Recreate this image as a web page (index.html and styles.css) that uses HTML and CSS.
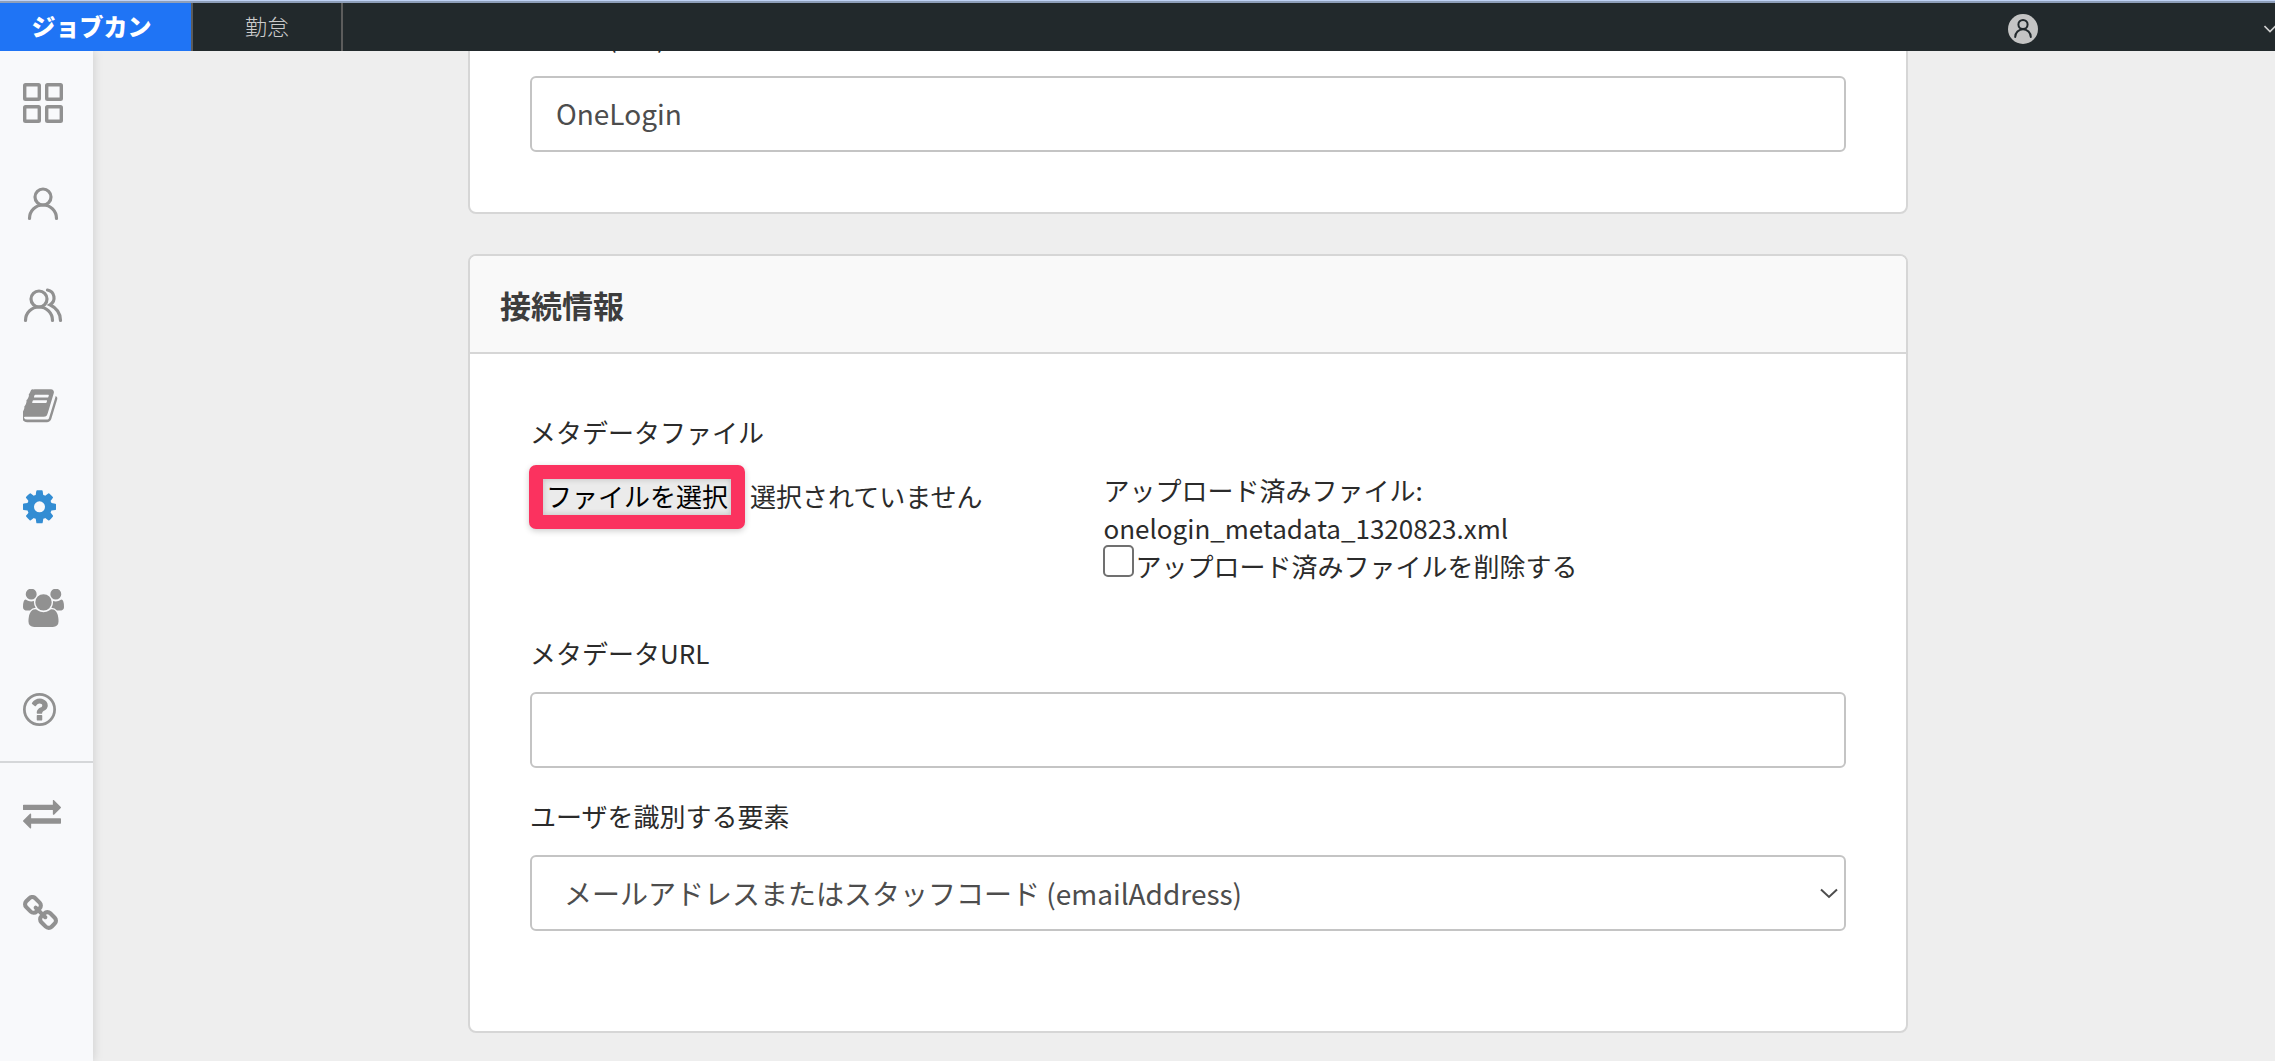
FILE: index.html
```html
<!DOCTYPE html>
<html lang="ja">
<head>
    <meta charset="UTF-8">
    <meta name="viewport" content="width=device-width, initial-scale=1.0">
    <title>ジョブカン</title>
    <link rel="stylesheet" href="styles.css">
</head>
<body>
    <header class="header">
        <a class="brand" href="#">ジョブカン</a>
        <a class="tab" href="#">勤怠</a>
        <button class="account" type="button" aria-label="アカウント">
            <svg width="30" height="30" viewBox="0 0 30 30">
                <circle cx="15" cy="15" r="15" fill="#c4c4c4"/>
                <g fill="none" stroke="#22292c" stroke-width="2" stroke-linecap="round">
                    <circle cx="15" cy="10.500" r="4.600"/>
                    <path d="M7.200 23a7.800 7.800 0 0 1 15.600 0"/>
                </g>
            </svg>
            <svg width="11" height="8" viewBox="0 0 11 8">
                <path d="M0.500 1L6 6.500L11.500 1" fill="none" stroke="#d0d0d0" stroke-width="1.600"/>
            </svg>
        </button>
    </header>

    <div class="layout">
        <nav class="sidebar">
            <a class="nav-item" href="#" aria-label="ダッシュボード">
                <svg width="42" height="43" viewBox="1 1 42 43" fill="none" stroke="currentColor" stroke-width="3.400">
                    <rect x="2.700" y="3.700" width="14.600" height="14.600" rx="0.800"/>
                    <rect x="24.700" y="3.700" width="14.600" height="14.600" rx="0.800"/>
                    <rect x="2.700" y="25.700" width="14.600" height="14.600" rx="0.800"/>
                    <rect x="24.700" y="25.700" width="14.600" height="14.600" rx="0.800"/>
                </svg>
            </a>
            <a class="nav-item" href="#" aria-label="スタッフ">
                <svg width="42" height="43" viewBox="1 1 42 43" fill="none" stroke="currentColor" stroke-width="3.200" stroke-linecap="round">
                    <circle cx="21" cy="15" r="8"/>
                    <path d="M7.500 36.500A13.500 13.500 0 0 1 34.500 36.500"/>
                </svg>
            </a>
            <a class="nav-item" href="#" aria-label="グループ">
                <svg width="42" height="43" viewBox="1 1 42 43" fill="none" stroke="currentColor" stroke-width="3.200" stroke-linecap="round">
                    <circle cx="17" cy="16" r="8"/>
                    <path d="M3.500 37.500A13.500 13.500 0 0 1 30.500 37.500"/>
                    <path d="M25.500 7A8 8 0 0 1 28 21.800C34.500 25 38.500 30.500 38.500 37.500"/>
                </svg>
            </a>
            <a class="nav-item" href="#" aria-label="帳票">
                <svg width="36" height="39" viewBox="64 32 1680 1792" fill="currentColor">
                    <path d="M1639 478q40 57 18 129l-275 906q-19 64-76.500 107.500t-122.500 43.500h-923q-77 0-148.500-53.500t-99.500-131.500q-24-67-2-127 0-4 3-27t4-37q1-8-3-21.500t-3-19.500q2-11 8-21t16.500-23.500 16.500-23.500q23-38 45-91.500t30-91.500q3-10 .500-30t-.500-28q3-11 17-28t17-23q21-36 42-92t25-90q1-9-2.500-32t.500-28q4-13 22-30.500t22-22.500q19-26 42.500-84.500t27.500-96.500q1-8-3-25.500t-2-26.500q2-8 9-18t18-23 17-21q8-12 16.500-30.500t15-35 16-36 19.500-32 26.500-23.500 36-11.500 47.500 5.500l-1 3q38-9 51-9h761q74 0 114 56t18 130l-274 906q-36 119-71.500 153.500t-128.500 34.500h-869q-27 0-38 15-11 16-1 43 24 70 144 70h923q29 0 56-15.500t35-41.500l300-987q7-22 5-57 38 15 59 43zm-1064 2q-4 13 2 22.500t20 9.500h608q13 0 25.500-9.500t16.500-22.500l21-64q4-13-2-22.500t-20-9.500h-608q-13 0-25.500 9.500t-16.500 22.500zm-83 256q-4 13 2 22.500t20 9.500h608q13 0 25.500-9.500t16.500-22.500l21-64q4-13-2-22.500t-20-9.500h-608q-13 0-25.500 9.500t-16.500 22.500z"/>
                </svg>
            </a>
            <a class="nav-item active" href="#" aria-label="設定">
                <svg width="33" height="39" viewBox="128 32 1536 1792" fill="currentColor">
                    <path d="M1152 896q0-106-75-181t-181-75-181 75-75 181 75 181 181 75 181-75 75-181zm512-109v222q0 12-8 23t-20 13l-185 28q-19 54-39 91 35 50 107 138 10 12 10 25t-9 23q-27 37-99 108t-94 71q-12 0-26-9l-138-108q-44 23-91 38-16 136-29 186-7 28-36 28h-222q-14 0-24.500-8.500t-11.500-21.500l-28-184q-49-16-90-37l-141 107q-10 9-25 9-14 0-25-11-126-114-165-168-7-10-7-23 0-12 8-23 15-21 51-66.500t54-70.500q-27-50-41-99l-183-27q-13-2-21-12.500t-8-23.500v-222q0-12 8-23t19-13l186-28q14-46 39-92-40-57-107-138-10-12-10-24 0-10 9-23 26-36 98.500-107.500t94.500-71.500q13 0 26 10l138 107q44-23 91-38 16-136 29-186 7-28 36-28h222q14 0 24.500 8.500t11.500 21.500l28 184q49 16 90 37l142-107q9-9 24-9 13 0 25 10 129 119 165 170 7 8 7 22 0 12-8 23-15 21-51 66.500t-54 70.500q26 50 41 98l183 28q13 2 21 12.500t8 23.500z"/>
                </svg>
            </a>
            <a class="nav-item" href="#" aria-label="ユーザー">
                <svg width="41" height="39" viewBox="0 32 1920 1792" fill="currentColor">
                    <path d="M593 896q-162 5-265 128h-134q-82 0-138-40.500t-56-118.500q0-353 124-353 6 0 43.500 21t97.500 42.500 119 21.500q67 0 133-23-5 37-5 66 0 139 81 256zm1071 637q0 120-73 189.500t-194 69.500h-874q-121 0-194-69.500t-73-189.500q0-53 3.500-103.500t14-109 26.500-108.500 43-97.500 62-81 85.500-53.500 111.500-20q10 0 43 21.500t73 48 107 48 135 21.500 135-21.500 107-48 73-48 43-21.500q61 0 111.500 20t85.500 53.500 62 81 43 97.500 26.500 108.500 14 109 3.500 103.500zm-1024-1277q0 106-75 181t-181 75-181-75-75-181 75-181 181-75 181 75 75 181zm704 384q0 159-112.500 271.500t-271.500 112.500-271.500-112.500-112.500-271.500 112.500-271.500 271.500-112.500 271.500 112.500 112.500 271.500zm576 225q0 78-56 118.500t-138 40.500h-134q-103-123-265-128 81-117 81-256 0-29-5-66 66 23 133 23 59 0 119-21.500t97.500-42.500 43.500-21q124 0 124 353zm-128-609q0 106-75 181t-181 75-181-75-75-181 75-181 181-75 181 75 75 181z"/>
                </svg>
            </a>
            <a class="nav-item" href="#" aria-label="ヘルプ">
                <svg width="33" height="39" viewBox="128 0 1536 1792" fill="currentColor">
                    <circle cx="896" cy="896" r="704" fill="none" stroke="currentColor" stroke-width="128"/>
                    <path d="M1024 1376v-192q0-14-9-23t-23-9h-192q-14 0-23 9t-9 23v192q0 14 9 23t23 9h192q14 0 23-9t9-23zm256-672q0-88-55.500-163t-138.500-116-170-41q-243 0-371 213-15 24 8 42l132 100q7 6 19 6 16 0 25-12 53-68 86-92 34-24 86-24 48 0 85.500 26t37.500 59q0 38-20 61t-68 45q-63 28-115.500 86.500t-52.500 125.500v36q0 14 9 23t23 9h192q14 0 23-9t9-23q0-19 21.500-49.500t54.500-49.500q32-18 49-28.500t46-35 44.500-48 28-60.500 12.500-81z"/>
                </svg>
            </a>
            <hr class="nav-divider">
            <a class="nav-item" href="#" aria-label="切り替え">
                <svg width="38" height="39" viewBox="0 32 1792 1792" fill="currentColor">
                    <path d="M1792 1184v192q0 13-9.500 22.500t-22.500 9.500h-1376v192q0 13-9.500 22.500t-22.500 9.500q-12 0-24-10l-319-320q-9-9-9-22 0-14 9-23l320-320q9-9 23-9 13 0 22.500 9.500t9.500 22.500v192h1376q13 0 22.500 9.500t9.500 22.500zm0-544q0 14-9 23l-320 320q-9 9-23 9-13 0-22.500-9.500t-9.500-22.500v-192h-1376q-13 0-22.500-9.500t-9.500-22.500v-192q0-13 9.500-22.500t22.500-9.500h1376v-192q0-14 9-23t23-9q12 0 24 10l319 319q9 9 9 23z"/>
                </svg>
            </a>
            <a class="nav-item" href="#" aria-label="連携">
                <svg width="35" height="39" viewBox="80 32 1632 1792" fill="currentColor">
                    <path d="M1520 1216q0-40-28-68l-208-208q-28-28-68-28-42 0-72 32 3 3 19 18.500t21.500 21.500 15 19 13 25.500 3.500 27.500q0 40-28 68t-68 28q-15 0-27.500-3.500t-25.500-13-19-15-21.500-21.500-18.500-19q-33 31-33 73 0 40 28 68l206 207q27 27 68 27 40 0 68-26l147-146q28-28 28-67zm-703-705q0-40-28-68l-206-207q-28-28-68-28-39 0-68 27l-147 146q-28 28-28 67 0 40 28 68l208 208q27 27 68 27 42 0 72-31-3-3-19-18.500t-21.500-21.500-15-19-13-25.500-3.500-27.500q0-40 28-68t68-28q15 0 27.500 3.500t25.500 13 19 15 21.500 21.500 18.500 19q33-31 33-73zm895 705q0 120-85 203l-147 146q-83 83-203 83-121 0-204-85l-206-207q-83-83-83-203 0-123 88-209l-88-88q-86 88-208 88-120 0-204-84l-208-208q-84-84-84-204t85-203l147-146q83-83 203-83 121 0 204 85l206 207q83 83 83 203 0 123-88 209l88 88q86-88 208-88 120 0 204 84l208 208q84 84 84 204z"/>
                </svg>
            </a>
        </nav>

        <main class="main">
            <section class="card card-scrolled">
                <div class="card-body">
                    <label class="label" for="display-name">表示名(IdP)</label>
                    <input class="control" id="display-name" type="text" value="OneLogin">
                </div>
            </section>

            <section class="card">
                <h2 class="card-title">接続情報</h2>
                <div class="card-body card-body-last">
                    <div class="field field-file">
                        <label class="label" for="metadata-file">メタデータファイル</label>
                        <div class="file-row">
                            <div class="file-picker">
                                <input class="file-input" id="metadata-file" type="file">
                                <label class="file-button" for="metadata-file">ファイルを選択</label>
                                <span>選択されていません</span>
                            </div>
                            <div class="uploaded">
                                <div>アップロード済みファイル:</div>
                                <div>onelogin_metadata_1320823.xml</div>
                                <div class="check-row">
                                    <input class="checkbox" id="delete-file" type="checkbox">
                                    <label for="delete-file">アップロード済みファイルを削除する</label>
                                </div>
                            </div>
                        </div>
                    </div>
                    <div class="field">
                        <label class="label" for="metadata-url">メタデータURL</label>
                        <input class="control" id="metadata-url" type="text">
                    </div>
                    <div class="field">
                        <label class="label" for="identifier">ユーザを識別する要素</label>
                        <div class="select-wrap">
                            <select class="control select" id="identifier">
                                <option>メールアドレスまたはスタッフコード (emailAddress)</option>
                            </select>
                            <svg class="select-arrow" width="18" height="11" viewBox="0 0 18 11">
                                <path d="M1 1.500L9 9L17 1.500" fill="none" stroke="#4d4d4d" stroke-width="2"/>
                            </svg>
                        </div>
                    </div>
                </div>
            </section>
        </main>
    </div>
</body>
</html>
```
FILE: styles.css
```css
* {
    box-sizing: border-box;
}
body {
    margin: 0;
    border-top: 1px solid #bfd2f6;
    font-family: "Noto Sans CJK JP", "Noto Sans", sans-serif;
    font-size: 26px;
    line-height: 38px;
    color: #2b2b2b;
    background-color: #eeeeee;
}
.header {
    position: relative;
    z-index: 2;
    display: flex;
    height: 50px;
    border-top: 2px solid #8e9fba;
    background-color: #22292c;
}
.brand,
.tab {
    display: flex;
    align-items: center;
    justify-content: center;
    border-right: 2px solid #5c5c5c;
    text-decoration: none;
    padding-bottom: 2px;
}
.brand {
    width: 193px;
    padding-right: 8px;
    background-color: #1f74f5;
    background-clip: padding-box;
    color: #ffffff;
    font-size: 24px;
    font-weight: 900;
}
.tab {
    width: 150px;
    padding-bottom: 4px;
    color: #cccccc;
    font-size: 22px;
    font-weight: 300;
}
.account {
    display: flex;
    align-items: center;
    justify-content: space-between;
    width: 267px;
    margin-left: auto;
    padding: 4px 0 0;
    border: none;
    background: none;
    cursor: pointer;
}
.layout {
    display: flex;
    min-height: calc(100vh - 51px);
}
.sidebar {
    width: 93px;
    flex-shrink: 0;
    padding-top: 2px;
    background-color: #f8f9fb;
    box-shadow: 0 0 10px rgba(0, 0, 0, 0.15);
}
.nav-item {
    display: flex;
    align-items: center;
    height: 101px;
    padding-left: 23px;
    color: #919191;
}
.nav-item.active {
    color: #338dd3;
}
.nav-divider {
    margin: 1px 0 0;
    border: none;
    border-top: 2px solid #d5d7d9;
}
.main {
    display: flex;
    flex-direction: column;
    align-items: center;
    flex: 1;
    gap: 40px;
    padding-left: 8px;
    min-width: 0;
}
.card {
    width: 100%;
    max-width: 1440px;
    border: 2px solid #d6d6d6;
    border-radius: 8px;
    background-color: #ffffff;
}
/* top of this card is scrolled under the header */
.card-scrolled {
    margin-top: -94px;
}
.card-title {
    margin: 0;
    padding: 30px 30px 28px;
    border-bottom: 2px solid #d6d6d6;
    border-radius: 6px 6px 0 0;
    background-color: #f9f9f9;
    color: #3d3d3d;
    font-size: 31px;
    font-weight: 700;
}
.card-body {
    padding: 60px;
}
.card-body-last {
    padding-bottom: 100px;
}
.field {
    margin-bottom: 30px;
}
.field:last-child {
    margin-bottom: 0;
}
.field-file {
    margin-bottom: 50px;
}
.label {
    display: block;
    margin-bottom: 21px;
    line-height: 36px;
}
.control {
    display: block;
    width: 100%;
    height: 76px;
    padding: 0 24px 2px;
    border: 2px solid #c4c4c4;
    border-radius: 6px;
    background-color: #ffffff;
    color: #4d4d4d;
    font-family: inherit;
    font-size: 28px;
}
.file-row {
    display: grid;
    grid-template-columns: 5fr 7fr;
    gap: 43px;
}
.file-picker {
    display: flex;
    align-items: center;
    gap: 5px;
    height: 52px;
    line-height: 36px;
}
.file-picker span {
    padding-bottom: 2px;
}
.file-input {
    position: absolute;
    width: 1px;
    height: 1px;
    opacity: 0;
}
.file-button {
    margin: 0 0 0 -1px;
    padding: 0 3px 2px;
    border: 14px solid #fb325f;
    border-radius: 7px;
    background-color: #ebebeb;
    box-shadow: 0 2px 6px rgba(0, 0, 0, 0.2), inset 0 0 6px rgba(0, 0, 0, 0.2);
    color: #000000;
    line-height: 34px;
    cursor: pointer;
}
.check-row {
    display: flex;
    align-items: center;
    height: 38px;
}
.checkbox {
    appearance: none;
    width: 31px;
    height: 32px;
    margin: 0 1px 10px 0;
    border: 2px solid #707070;
    border-radius: 5px;
    background-color: #ffffff;
}
.checkbox:checked {
    background-color: #338dd3;
}
.select-wrap {
    position: relative;
}
.select {
    appearance: none;
    padding: 0 56px 0 32px;
}
.select-arrow {
    position: absolute;
    top: 33px;
    right: 8px;
    pointer-events: none;
}
```
